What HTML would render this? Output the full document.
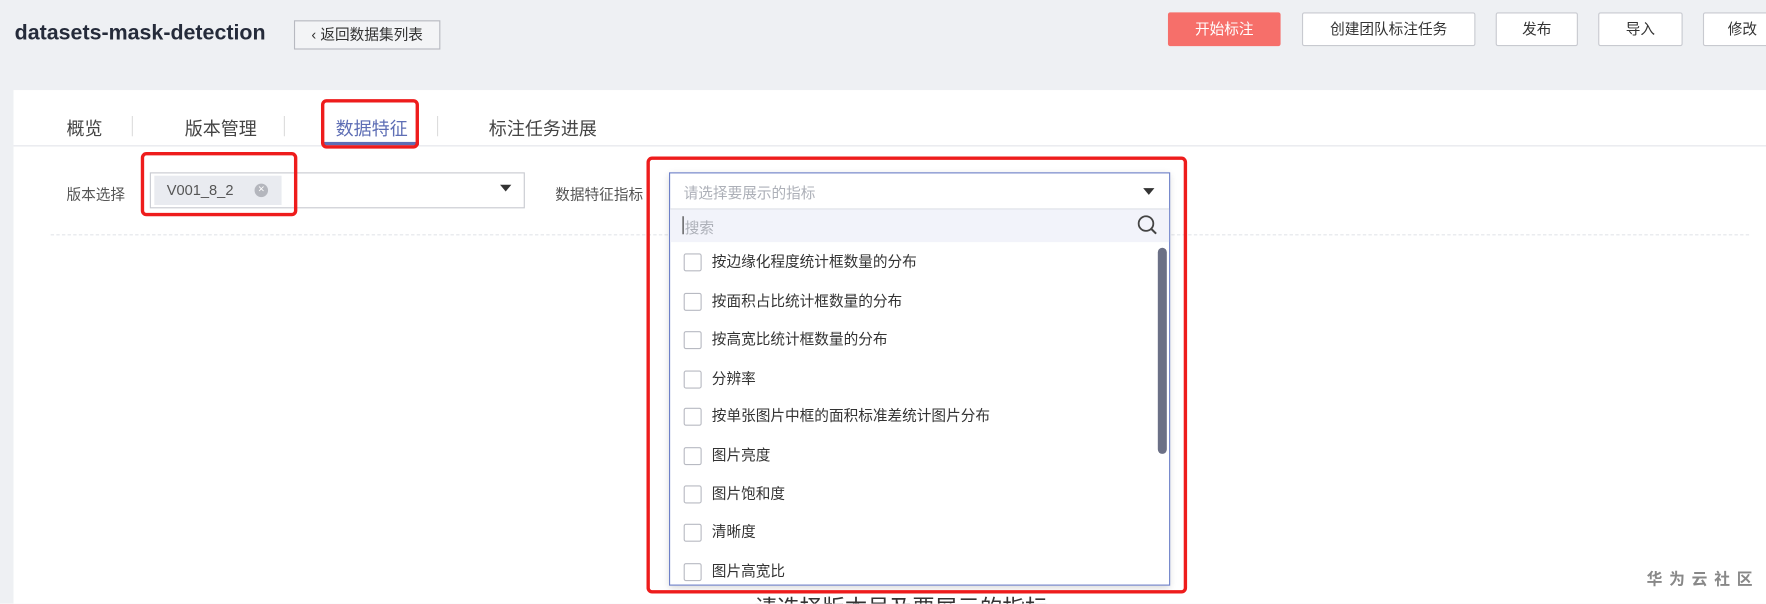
<!DOCTYPE html>
<html><head><meta charset="utf-8"><style>
html,body{margin:0;padding:0;width:1766px;height:603px;overflow:hidden;background:#fff}
#w{position:absolute;left:0;top:0;width:1568px;height:536px;overflow:hidden;background:#eef0f3;transform:scale(1.12628);transform-origin:0 0;font-family:"Liberation Sans","Noto Sans CJK SC",sans-serif;color:#333}
.a{position:absolute}
.btn{position:absolute;top:11px;height:30px;box-sizing:border-box;border:1px solid #c8cad0;background:#fff;border-radius:2px;font-size:13px;line-height:28px;text-align:center;color:#333}
.red{position:absolute;border:3px solid #ee1c1c;border-radius:5px;box-sizing:border-box}
.it{position:absolute;left:607px;font-size:13px;color:#333;height:18px;line-height:18px}
.it i{display:inline-block;width:16px;height:16px;border:1px solid #b8bac2;border-radius:2px;background:#fff;vertical-align:middle;margin-right:9px;box-sizing:border-box}
.it span{vertical-align:middle}
</style></head><body><div id="w">
<div class="a" style="left:13px;top:19px;font-size:19px;font-weight:bold;color:#252b3a">datasets-mask-detection</div>
<div class="a" style="left:261px;top:18px;width:130px;height:26px;box-sizing:border-box;border:1px solid #b7b9c0;background:#f3f4f6;font-size:13px;line-height:24px;text-align:center;color:#333">‹ 返回数据集列表</div>
<div class="btn" style="left:1037px;width:100px;background:#f66f6a;border-color:#f66f6a;color:#fff">开始标注</div>
<div class="btn" style="left:1156px;width:154px">创建团队标注任务</div>
<div class="btn" style="left:1328px;width:73px">发布</div>
<div class="btn" style="left:1419px;width:75px">导入</div>
<div class="btn" style="left:1512px;width:70px">修改</div>
<div class="a" style="left:12px;top:80px;width:1560px;height:500px;background:#fff"></div>
<div class="a" style="left:12px;top:129px;width:1556px;height:1px;background:#e3e5ea"></div>
<div class="a" style="left:59px;top:101px;font-size:16px;color:#444">概览</div>
<div class="a" style="left:117px;top:103px;width:1px;height:18px;background:#ddd"></div>
<div class="a" style="left:164px;top:101px;font-size:16px;color:#444">版本管理</div>
<div class="a" style="left:252px;top:103px;width:1px;height:18px;background:#ddd"></div>
<div class="a" style="left:298px;top:101px;font-size:16px;color:#5e6eb5">数据特征</div>
<div class="a" style="left:287px;top:126px;width:85px;height:3px;background:#5e6eb5"></div>
<div class="a" style="left:388px;top:103px;width:1px;height:18px;background:#ddd"></div>
<div class="a" style="left:434px;top:101px;font-size:16px;color:#444">标注任务进展</div>
<div class="a" style="left:59px;top:162px;font-size:13px;color:#555">版本选择</div>
<div class="a" style="left:133px;top:153px;width:333px;height:32px;box-sizing:border-box;border:1px solid #c8cad0;background:#fff"></div>
<div class="a" style="left:137px;top:156px;width:113px;height:26px;background:#e9ebf0;font-size:13px;line-height:26px;color:#555"><span style="margin-left:11px">V001_8_2</span><span style="position:absolute;left:89px;top:7px;width:12px;height:12px;border-radius:50%;background:#b4b6bd;color:#fff;font-size:10px;line-height:12px;text-align:center">×</span></div>
<div class="a" style="left:444px;top:164px;width:0;height:0;border-left:5px solid transparent;border-right:5px solid transparent;border-top:6px solid #333"></div>
<div class="a" style="left:493px;top:162px;font-size:13px;color:#555">数据特征指标</div>
<div class="a" style="left:45px;top:208px;width:1508px;border-top:1px dashed #e3e5ea"></div>
<div class="a" style="left:670px;top:524px;font-size:20px;color:#333">请选择版本号及要展示的指标</div>
<div class="a" style="left:594px;top:153px;width:445px;height:367px;box-sizing:border-box;border:1px solid #6d80c8;background:#fff;box-shadow:0 2px 6px rgba(0,0,0,.15)"></div>
<div class="a" style="left:607px;top:161px;font-size:13px;color:#adb0b8">请选择要展示的指标</div>
<div class="a" style="left:1015px;top:167px;width:0;height:0;border-left:5px solid transparent;border-right:5px solid transparent;border-top:6px solid #333"></div>
<div class="a" style="left:595px;top:185px;width:443px;height:1px;background:#dfe1e8"></div>
<div class="a" style="left:595px;top:186px;width:443px;height:29px;background:#f2f3fa"></div>
<div class="a" style="left:606px;top:192px;width:1px;height:16px;background:#333"></div>
<div class="a" style="left:608px;top:192px;font-size:13px;color:#adb0b8">搜索</div>
<svg class="a" style="left:1009px;top:190px" width="20" height="20" viewBox="0 0 20 20"><circle cx="8.5" cy="8.5" r="6.5" fill="none" stroke="#444" stroke-width="1.6"/><path d="M13.3 13.3L17.5 17.5" stroke="#444" stroke-width="1.8"/></svg>
<div class="a" style="left:1028px;top:220px;width:8px;height:183px;border-radius:4px;background:#6b7086"></div>
<div class="it" style="top:223px"><i></i><span>按边缘化程度统计框数量的分布</span></div>
<div class="it" style="top:258px"><i></i><span>按面积占比统计框数量的分布</span></div>
<div class="it" style="top:292px"><i></i><span>按高宽比统计框数量的分布</span></div>
<div class="it" style="top:327px"><i></i><span>分辨率</span></div>
<div class="it" style="top:360px"><i></i><span>按单张图片中框的面积标准差统计图片分布</span></div>
<div class="it" style="top:395px"><i></i><span>图片亮度</span></div>
<div class="it" style="top:429px"><i></i><span>图片饱和度</span></div>
<div class="it" style="top:463px"><i></i><span>清晰度</span></div>
<div class="it" style="top:498px"><i></i><span>图片高宽比</span></div>
<div class="red" style="left:285px;top:88px;width:87px;height:44px"></div>
<div class="red" style="left:125px;top:135px;width:139px;height:57px"></div>
<div class="red" style="left:574px;top:139px;width:480px;height:388px"></div>
<div class="a" style="left:1462px;top:504px;font-size:14px;color:#888;letter-spacing:6px;font-weight:bold">华为云社区</div>
</div></body></html>
